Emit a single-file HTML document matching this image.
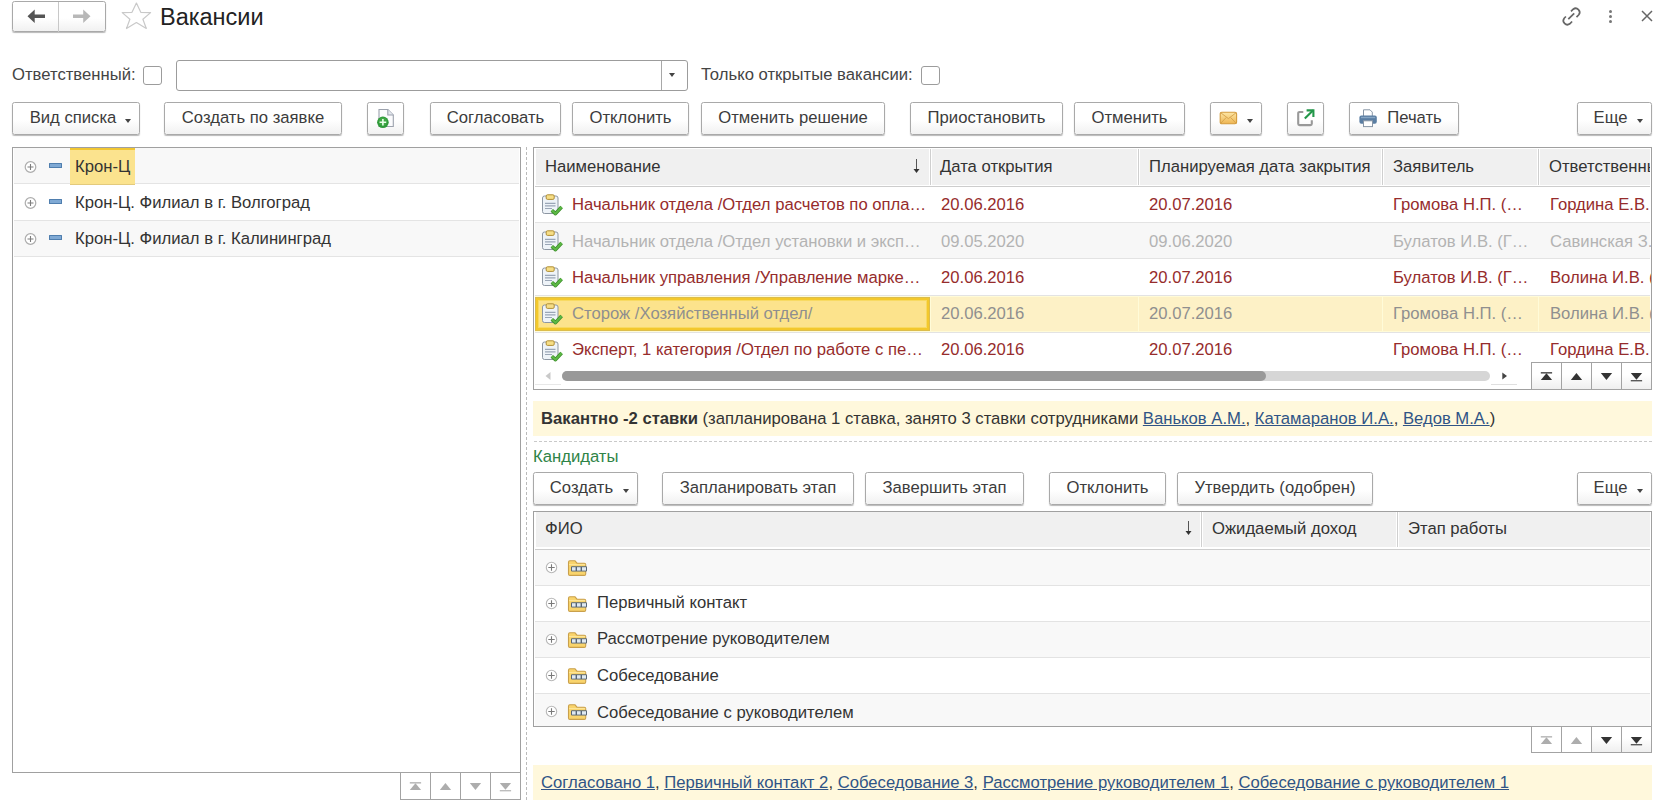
<!DOCTYPE html><html><head><meta charset="utf-8"><title>Вакансии</title><style>
*{margin:0;padding:0;box-sizing:content-box}
html,body{width:1677px;height:801px;overflow:hidden;background:#fff}
body{position:relative;font-family:"Liberation Sans",sans-serif;font-size:16.67px;color:#333}
.a{position:absolute}
.t{position:absolute;white-space:nowrap;line-height:20px}
.btn{position:absolute;border:1px solid #a9a9a9;border-radius:2.5px;background:linear-gradient(#fff 0%,#fff 55%,#f1f1f1 100%);box-shadow:0 1px 1px rgba(0,0,0,.28)}
.bl{position:absolute;top:0;line-height:30px;text-align:center;white-space:nowrap;color:#3c3c3c}
.dd{position:absolute;width:0;height:0;border-left:3.5px solid transparent;border-right:3.5px solid transparent;border-top:4px solid #444}
.ell{overflow:hidden;text-overflow:ellipsis}
</style></head><body><div class="btn" style="left:12px;top:1px;width:92px;height:29px"></div>
<div class="a" style="left:58px;top:2px;width:1px;height:30px;background:#c8c8c8"></div>
<svg class="a" style="left:27px;top:9px" width="20" height="16" viewBox="0 0 20 16"><path d="M0.5 7.2 L7.7 0.6 L7.7 5.6 L18 5.6 L18 8.9 L7.7 8.9 L7.7 13.9 Z" fill="#555"/></svg>
<svg class="a" style="left:72px;top:9px" width="20" height="16" viewBox="0 0 20 16"><path d="M18.5 7.2 L11.2 0.6 L11.2 5.6 L1 5.6 L1 8.9 L11.2 8.9 L11.2 13.9 Z" fill="#b8b8b8"/></svg>
<svg class="a" style="left:121px;top:0px" width="31" height="31" viewBox="0 0 31 31"><path d="M15.4 3 L19.8 12.3 L29.6 12.6 L21.9 19.2 L25.3 28.5 L15.4 22.5 L5.5 28.5 L8.9 19.2 L1.2 12.6 L11 12.3 Z" fill="none" stroke="#c9c9c9" stroke-width="1.2" stroke-linejoin="round"/></svg>
<div class="t" style="left:160px;top:4px;font-size:23.5px;line-height:26px;color:#222">Вакансии</div>
<svg class="a" style="left:1560px;top:0px" width="24" height="30" viewBox="0 0 24 30"><g fill="none" stroke="#666" stroke-width="1.7"><path d="M11 11.4 L13.2 9.2 A4 4 0 0 1 18.8 14.8 L16.5 17.1"/><path d="M5.9 16.5 L4.2 18.2 A4 4 0 0 0 9.8 23.8 L12.1 21.5"/><path d="M8.3 19.2 L14.2 13.4"/></g></svg>
<div class="a" style="left:1608.7px;top:9.7px;width:3.6px;height:3.6px;border-radius:50%;background:#777"></div>
<div class="a" style="left:1608.7px;top:14.7px;width:3.6px;height:3.6px;border-radius:50%;background:#777"></div>
<div class="a" style="left:1608.7px;top:19.7px;width:3.6px;height:3.6px;border-radius:50%;background:#777"></div>
<svg class="a" style="left:1640px;top:9px" width="14" height="14" viewBox="0 0 14 14"><path d="M2 2 L12 12 M12 2 L2 12" stroke="#666" stroke-width="1.45"/></svg>
<div class="t" style="left:12px;top:65px;color:#444;font-size:16.67px;font-weight:normal;">Ответственный:</div>
<div class="a" style="left:143px;top:66px;width:17px;height:17px;border:1px solid #9c9c9c;border-radius:3px;background:#fff"></div>
<div class="a" style="left:176px;top:60px;width:510px;height:29px;border:1px solid #9c9c9c;border-radius:3px;background:#fff"></div>
<div class="a" style="left:661px;top:61px;width:1px;height:29px;background:#a8a8a8"></div>
<div class="dd" style="left:669px;top:73px;border-top-color:#444"></div>
<div class="t" style="left:701px;top:65px;color:#444;font-size:16.67px;font-weight:normal;">Только открытые вакансии:</div>
<div class="a" style="left:921px;top:66px;width:17px;height:17px;border:1px solid #9c9c9c;border-radius:3px;background:#fff"></div>
<div class="btn" style="left:12px;top:102px;width:126px;height:31px">
<div class="bl" style="left:-3px;width:126px">Вид списка</div>

<div class="dd" style="left:112px;top:15.5px"></div>
</div>
<div class="btn" style="left:164px;top:102px;width:176px;height:31px">
<div class="bl" style="left:0px;width:176px">Создать по заявке</div>

</div>
<div class="btn" style="left:367px;top:102px;width:35px;height:31px">
<svg class="a" style="left:7px;top:4px" width="22" height="22" viewBox="0 0 22 22"><path d="M4 2.5 H12.8 L18.3 8 V19.5 H4 Z" fill="#fbfbfd" stroke="#9ca2ad" stroke-width="1.1"/><path d="M12.8 2.5 V8 H18.3" fill="#e4e8ee" stroke="#9ca2ad" stroke-width="1.1"/><circle cx="7.9" cy="15.3" r="5.8" fill="#2f9a3a"/><circle cx="7.9" cy="14.6" r="4.2" fill="#4cb24f" opacity="0.6"/><path d="M7.9 12 V18.6 M4.6 15.3 H11.2" stroke="#e9ffe9" stroke-width="1.6"/></svg>
</div>
<div class="btn" style="left:430px;top:102px;width:129px;height:31px">
<div class="bl" style="left:0px;width:129px">Согласовать</div>

</div>
<div class="btn" style="left:572px;top:102px;width:115px;height:31px">
<div class="bl" style="left:0px;width:115px">Отклонить</div>

</div>
<div class="btn" style="left:701px;top:102px;width:182px;height:31px">
<div class="bl" style="left:0px;width:182px">Отменить решение</div>

</div>
<div class="btn" style="left:910px;top:102px;width:151px;height:31px">
<div class="bl" style="left:0px;width:151px">Приостановить</div>

</div>
<div class="btn" style="left:1074px;top:102px;width:109px;height:31px">
<div class="bl" style="left:0px;width:109px">Отменить</div>

</div>
<div class="btn" style="left:1210px;top:102px;width:50px;height:31px">
<svg class="a" style="left:8px;top:8px" width="20" height="15" viewBox="0 0 20 15"><defs><linearGradient id="mg" x1="0" y1="0" x2="0" y2="1"><stop offset="0" stop-color="#fde7a6"/><stop offset="1" stop-color="#eeb552"/></linearGradient></defs><rect x="1.2" y="1.2" width="16.4" height="11.6" rx="1.6" fill="url(#mg)" stroke="#d39b3c" stroke-width="1.1"/><path d="M1.8 1.8 L9.4 7.6 L17 1.8 M1.8 12.2 L7.3 6.4 M17 12.2 L11.5 6.4" fill="none" stroke="#d5a04a" stroke-width="0.9"/></svg>
<div class="dd" style="left:36px;top:15.5px"></div>
</div>
<div class="btn" style="left:1287px;top:102px;width:35px;height:31px">
<svg class="a" style="left:7px;top:4px" width="22" height="22" viewBox="0 0 22 22"><path d="M8.3 5 H4.6 Q3.2 5 3.2 6.4 V16.7 Q3.2 18.1 4.6 18.1 H15.4 Q16.8 18.1 16.8 16.7 V13.2" fill="none" stroke="#999" stroke-width="2.1"/><path d="M9.8 11.6 L18.2 3.3" stroke="#23974a" stroke-width="2.1"/><path d="M11.6 3.4 H18.4 V10" fill="none" stroke="#23974a" stroke-width="2.1"/></svg>
</div>
<div class="btn" style="left:1349px;top:102px;width:108px;height:31px">
<div class="bl" style="left:10.5px;width:108px">Печать</div>
<svg class="a" style="left:9px;top:6px" width="20" height="19" viewBox="0 0 20 19"><path d="M4.5 0.8 H11 L13.3 3.1 V8 H4.5 Z" fill="#fff" stroke="#8896a6" stroke-width="1"/><rect x="0.4" y="6.6" width="17.4" height="8.2" rx="2" fill="#5a7ea3"/><rect x="2" y="7.8" width="14.2" height="1.4" fill="#86a6c4"/><rect x="4.5" y="11.8" width="9" height="5.8" fill="#fff" stroke="#8896a6" stroke-width="1"/></svg>
</div>
<div class="btn" style="left:1577px;top:102px;width:73px;height:31px">
<div class="bl" style="left:-4px;width:73px">Еще</div>

<div class="dd" style="left:59px;top:15.5px"></div>
</div>
<div class="a" style="left:12px;top:147px;width:507px;height:624px;border:1px solid #a0a0a0;background:#fff"></div>
<div class="a" style="left:14px;top:148px;width:505px;height:35px;background:#f8f8f8"></div>
<div class="a" style="left:14px;top:183px;width:505px;height:1px;background:#e4e4e4"></div>
<svg class="a" style="left:24px;top:160px" width="13" height="13" viewBox="0 0 13 13"><circle cx="6.5" cy="7" r="5.3" fill="#fff" stroke="#adadad" stroke-width="1.2"/><path d="M6.5 4 V10 M3.5 7 H9.5" stroke="#7d7d7d" stroke-width="1.1"/></svg>
<div class="a" style="left:49px;top:163px;width:11px;height:3px;border:1px solid #4f7eae;background:#7fa9d4;border-radius:0.5px"></div>
<div class="a" style="left:14px;top:184px;width:505px;height:36px;background:#fff"></div>
<div class="a" style="left:14px;top:220px;width:505px;height:1px;background:#e4e4e4"></div>
<svg class="a" style="left:24px;top:196px" width="13" height="13" viewBox="0 0 13 13"><circle cx="6.5" cy="7" r="5.3" fill="#fff" stroke="#adadad" stroke-width="1.2"/><path d="M6.5 4 V10 M3.5 7 H9.5" stroke="#7d7d7d" stroke-width="1.1"/></svg>
<div class="a" style="left:49px;top:199px;width:11px;height:3px;border:1px solid #4f7eae;background:#7fa9d4;border-radius:0.5px"></div>
<div class="a" style="left:14px;top:221px;width:505px;height:35px;background:#f8f8f8"></div>
<div class="a" style="left:14px;top:256px;width:505px;height:1px;background:#e4e4e4"></div>
<svg class="a" style="left:24px;top:232px" width="13" height="13" viewBox="0 0 13 13"><circle cx="6.5" cy="7" r="5.3" fill="#fff" stroke="#adadad" stroke-width="1.2"/><path d="M6.5 4 V10 M3.5 7 H9.5" stroke="#7d7d7d" stroke-width="1.1"/></svg>
<div class="a" style="left:49px;top:235px;width:11px;height:3px;border:1px solid #4f7eae;background:#7fa9d4;border-radius:0.5px"></div>
<div class="a" style="left:70px;top:148px;width:65px;height:37px;background:#fbe38e;border-top:2px solid #f2c733;border-bottom:1px solid #e3ca7c;box-sizing:border-box"></div>
<div class="t" style="left:75px;top:157px;color:#333;font-size:16.67px;font-weight:normal;">Крон-Ц</div>
<div class="t" style="left:75px;top:193px;color:#333;font-size:16.67px;font-weight:normal;">Крон-Ц. Филиал в г. Волгоград</div>
<div class="t" style="left:75px;top:229px;color:#333;font-size:16.67px;font-weight:normal;">Крон-Ц. Филиал в г. Калининград</div>
<div class="a" style="left:526px;top:147px;width:1px;height:654px;background:repeating-linear-gradient(#bababa 0 3px,transparent 3px 5px)"></div>
<div class="a" style="left:533px;top:147px;width:1117px;height:241px;border:1px solid #a0a0a0;background:#fff;overflow:hidden"></div>
<div class="a" style="left:536px;top:149px;width:1114px;height:36px;background:#f0f0f0"></div>
<div class="a" style="left:535px;top:186px;width:1115px;height:1px;background:#cdcdcd"></div>
<div class="a" style="left:929px;top:149px;width:3px;height:36px;background:#fff"></div>
<div class="a" style="left:930px;top:149px;width:1px;height:36px;background:#cfcfcf"></div>
<div class="a" style="left:1137px;top:149px;width:3px;height:36px;background:#fff"></div>
<div class="a" style="left:1138px;top:149px;width:1px;height:36px;background:#cfcfcf"></div>
<div class="a" style="left:1381px;top:149px;width:3px;height:36px;background:#fff"></div>
<div class="a" style="left:1382px;top:149px;width:1px;height:36px;background:#cfcfcf"></div>
<div class="a" style="left:1537px;top:149px;width:3px;height:36px;background:#fff"></div>
<div class="a" style="left:1538px;top:149px;width:1px;height:36px;background:#cfcfcf"></div>
<div class="t" style="left:545px;top:157px;color:#333;font-size:16.67px;font-weight:normal;">Наименование</div>
<svg class="a" style="left:912px;top:158px" width="9" height="16" viewBox="0 0 9 16"><path d="M4.5 1 V14" stroke="#555" stroke-width="1"/><path d="M1.5 11 L4.5 15 L7.5 11 Z" fill="#333"/></svg>
<div class="t" style="left:940px;top:157px;color:#333;font-size:16.67px;font-weight:normal;">Дата открытия</div>
<div class="t" style="left:1149px;top:157px;color:#333;font-size:16.67px;font-weight:normal;">Планируемая дата закрытия</div>
<div class="t" style="left:1393px;top:157px;color:#333;font-size:16.67px;font-weight:normal;">Заявитель</div>
<div class="t" style="left:1549px;top:157px;color:#333;font-size:16.67px;font-weight:normal;width:101px;overflow:hidden">Ответственный</div>
<div class="a" style="left:535px;top:187px;width:1115px;height:35px;background:#fff"></div>
<div class="a" style="left:535px;top:222px;width:1115px;height:1px;background:#e3e3e3"></div>
<svg class="a" style="left:542px;top:194px" width="22" height="22" viewBox="0 0 22 22"><rect x="0.5" y="2" width="15.5" height="17.5" rx="2" fill="#eef3f8" stroke="#8d97a3"/><rect x="4.2" y="0.8" width="8" height="4.6" rx="1.3" fill="#f6de86" stroke="#b08e36"/><path d="M3 9.3 H13.5 M3 11.8 H13.5 M3 14.5 H10" stroke="#9aa6b6" stroke-width="1.2"/><path d="M9.8 16.3 L13.5 19.6 L19.6 13" fill="none" stroke="#3d8f2c" stroke-width="3.6" stroke-linejoin="round"/><path d="M9.8 16.3 L13.5 19.6 L19.6 13" fill="none" stroke="#5cb845" stroke-width="2"/></svg>
<div class="t" style="left:572px;top:195px;color:#962c2c;font-size:16.67px;font-weight:normal;">Начальник отдела /Отдел расчетов по опла…</div>
<div class="t" style="left:941px;top:195px;color:#962c2c;font-size:16.67px;font-weight:normal;">20.06.2016</div>
<div class="t" style="left:1149px;top:195px;color:#962c2c;font-size:16.67px;font-weight:normal;">20.07.2016</div>
<div class="t" style="left:1393px;top:195px;color:#962c2c;font-size:16.67px;font-weight:normal;">Громова Н.П. (…</div>
<div class="t" style="left:1550px;top:195px;color:#962c2c;font-size:16.67px;font-weight:normal;width:101px;overflow:hidden">Гордина Е.В. (Г</div>
<div class="a" style="left:535px;top:223px;width:1115px;height:35px;background:#f7f7f7"></div>
<div class="a" style="left:535px;top:258px;width:1115px;height:1px;background:#e3e3e3"></div>
<svg class="a" style="left:542px;top:230px" width="22" height="22" viewBox="0 0 22 22"><rect x="0.5" y="2" width="15.5" height="17.5" rx="2" fill="#eef3f8" stroke="#8d97a3"/><rect x="4.2" y="0.8" width="8" height="4.6" rx="1.3" fill="#f6de86" stroke="#b08e36"/><path d="M3 9.3 H13.5 M3 11.8 H13.5 M3 14.5 H10" stroke="#9aa6b6" stroke-width="1.2"/><path d="M9.8 16.3 L13.5 19.6 L19.6 13" fill="none" stroke="#3d8f2c" stroke-width="3.6" stroke-linejoin="round"/><path d="M9.8 16.3 L13.5 19.6 L19.6 13" fill="none" stroke="#5cb845" stroke-width="2"/></svg>
<div class="t" style="left:572px;top:232px;color:#b3b3b3;font-size:16.67px;font-weight:normal;">Начальник отдела /Отдел установки и эксп…</div>
<div class="t" style="left:941px;top:232px;color:#b3b3b3;font-size:16.67px;font-weight:normal;">09.05.2020</div>
<div class="t" style="left:1149px;top:232px;color:#b3b3b3;font-size:16.67px;font-weight:normal;">09.06.2020</div>
<div class="t" style="left:1393px;top:232px;color:#b3b3b3;font-size:16.67px;font-weight:normal;">Булатов И.В. (Г…</div>
<div class="t" style="left:1550px;top:232px;color:#b3b3b3;font-size:16.67px;font-weight:normal;width:101px;overflow:hidden">Савинская З.В.</div>
<div class="a" style="left:535px;top:259px;width:1115px;height:36px;background:#fff"></div>
<div class="a" style="left:535px;top:295px;width:1115px;height:1px;background:#e3e3e3"></div>
<svg class="a" style="left:542px;top:266px" width="22" height="22" viewBox="0 0 22 22"><rect x="0.5" y="2" width="15.5" height="17.5" rx="2" fill="#eef3f8" stroke="#8d97a3"/><rect x="4.2" y="0.8" width="8" height="4.6" rx="1.3" fill="#f6de86" stroke="#b08e36"/><path d="M3 9.3 H13.5 M3 11.8 H13.5 M3 14.5 H10" stroke="#9aa6b6" stroke-width="1.2"/><path d="M9.8 16.3 L13.5 19.6 L19.6 13" fill="none" stroke="#3d8f2c" stroke-width="3.6" stroke-linejoin="round"/><path d="M9.8 16.3 L13.5 19.6 L19.6 13" fill="none" stroke="#5cb845" stroke-width="2"/></svg>
<div class="t" style="left:572px;top:268px;color:#962c2c;font-size:16.67px;font-weight:normal;">Начальник управления /Управление марке…</div>
<div class="t" style="left:941px;top:268px;color:#962c2c;font-size:16.67px;font-weight:normal;">20.06.2016</div>
<div class="t" style="left:1149px;top:268px;color:#962c2c;font-size:16.67px;font-weight:normal;">20.07.2016</div>
<div class="t" style="left:1393px;top:268px;color:#962c2c;font-size:16.67px;font-weight:normal;">Булатов И.В. (Г…</div>
<div class="t" style="left:1550px;top:268px;color:#962c2c;font-size:16.67px;font-weight:normal;width:101px;overflow:hidden">Волина И.В. (Г</div>
<div class="a" style="left:535px;top:296px;width:1115px;height:36px;background:#fdf1c6"></div>
<div class="a" style="left:535px;top:332px;width:1115px;height:1px;background:#e3e3e3"></div>
<div class="a" style="left:535px;top:296px;width:1115px;height:1px;background:#fffbd8"></div>
<div class="a" style="left:535px;top:331px;width:1115px;height:1px;background:#fffbd8"></div>
<div class="a" style="left:930px;top:296px;width:1px;height:36px;background:#fffbd8"></div>
<div class="a" style="left:1138px;top:296px;width:1px;height:36px;background:#fffbd8"></div>
<div class="a" style="left:1382px;top:296px;width:1px;height:36px;background:#fffbd8"></div>
<div class="a" style="left:1538px;top:296px;width:1px;height:36px;background:#fffbd8"></div>
<div class="a" style="left:535px;top:297px;width:393px;height:32px;border:1px solid #dcbd4c;box-shadow:inset 0 0 0 2px #f3c82c,inset 0 0 0 3px #f8da62;background:#fce38c"></div>
<svg class="a" style="left:542px;top:303px" width="22" height="22" viewBox="0 0 22 22"><rect x="0.5" y="2" width="15.5" height="17.5" rx="2" fill="#eef3f8" stroke="#8d97a3"/><rect x="4.2" y="0.8" width="8" height="4.6" rx="1.3" fill="#f6de86" stroke="#b08e36"/><path d="M3 9.3 H13.5 M3 11.8 H13.5 M3 14.5 H10" stroke="#9aa6b6" stroke-width="1.2"/><path d="M9.8 16.3 L13.5 19.6 L19.6 13" fill="none" stroke="#3d8f2c" stroke-width="3.6" stroke-linejoin="round"/><path d="M9.8 16.3 L13.5 19.6 L19.6 13" fill="none" stroke="#5cb845" stroke-width="2"/></svg>
<div class="t" style="left:572px;top:304px;color:#8f8f8f;font-size:16.67px;font-weight:normal;">Сторож /Хозяйственный отдел/</div>
<div class="t" style="left:941px;top:304px;color:#8f8f8f;font-size:16.67px;font-weight:normal;">20.06.2016</div>
<div class="t" style="left:1149px;top:304px;color:#8f8f8f;font-size:16.67px;font-weight:normal;">20.07.2016</div>
<div class="t" style="left:1393px;top:304px;color:#8f8f8f;font-size:16.67px;font-weight:normal;">Громова Н.П. (…</div>
<div class="t" style="left:1550px;top:304px;color:#8f8f8f;font-size:16.67px;font-weight:normal;width:101px;overflow:hidden">Волина И.В. (Г</div>
<div class="a" style="left:535px;top:333px;width:1115px;height:34px;background:#fff"></div>
<svg class="a" style="left:542px;top:340px" width="22" height="22" viewBox="0 0 22 22"><rect x="0.5" y="2" width="15.5" height="17.5" rx="2" fill="#eef3f8" stroke="#8d97a3"/><rect x="4.2" y="0.8" width="8" height="4.6" rx="1.3" fill="#f6de86" stroke="#b08e36"/><path d="M3 9.3 H13.5 M3 11.8 H13.5 M3 14.5 H10" stroke="#9aa6b6" stroke-width="1.2"/><path d="M9.8 16.3 L13.5 19.6 L19.6 13" fill="none" stroke="#3d8f2c" stroke-width="3.6" stroke-linejoin="round"/><path d="M9.8 16.3 L13.5 19.6 L19.6 13" fill="none" stroke="#5cb845" stroke-width="2"/></svg>
<div class="t" style="left:572px;top:340px;color:#962c2c;font-size:16.67px;font-weight:normal;">Эксперт, 1 категория /Отдел по работе с пе…</div>
<div class="t" style="left:941px;top:340px;color:#962c2c;font-size:16.67px;font-weight:normal;">20.06.2016</div>
<div class="t" style="left:1149px;top:340px;color:#962c2c;font-size:16.67px;font-weight:normal;">20.07.2016</div>
<div class="t" style="left:1393px;top:340px;color:#962c2c;font-size:16.67px;font-weight:normal;">Громова Н.П. (…</div>
<div class="t" style="left:1550px;top:340px;color:#962c2c;font-size:16.67px;font-weight:normal;width:101px;overflow:hidden">Гордина Е.В. (Г</div>
<svg class="a" style="left:544px;top:371px" width="8" height="10" viewBox="0 0 8 10"><path d="M6.5 1 L1.5 5 L6.5 9 Z" fill="#c9c9c9"/></svg>
<div class="a" style="left:535px;top:384px;width:26px;height:1px;background:#e8e8e8"></div>
<div class="a" style="left:562px;top:371px;width:928px;height:10px;border-radius:5px;background:#d6d6d6"></div>
<div class="a" style="left:562px;top:371px;width:704px;height:10px;border-radius:5px;background:#999"></div>
<svg class="a" style="left:1501px;top:371px" width="8" height="10" viewBox="0 0 8 10"><path d="M1.3 1.6 L6 5 L1.3 8.6 Z" fill="#444"/></svg>
<div class="a" style="left:1491px;top:384px;width:26px;height:1px;background:#e0e0e0"></div>
<div class="a" style="left:533px;top:401px;width:1119px;height:35px;background:#fff8dc"></div>
<div class="a" style="left:533px;top:441px;width:1119px;height:1px;background:repeating-linear-gradient(90deg,transparent 0 1px,#c9c9c9 1px 4px,transparent 4px 5px)"></div>
<div class="t" style="left:541px;top:409px;color:#333;font-size:16.67px;font-weight:normal;"><b style="color:#333">Вакантно -2 ставки</b> (запланирована 1 ставка, занято 3 ставки сотрудниками <u style="color:#2f5486">Ваньков А.М.</u>, <u style="color:#2f5486">Катамаранов И.А.</u>, <u style="color:#2f5486">Ведов М.А.</u>)</div>
<div class="t" style="left:533px;top:447px;color:#2f8447;font-size:16.67px;font-weight:normal;">Кандидаты</div>
<div class="btn" style="left:533px;top:472px;width:103px;height:31px">
<div class="bl" style="left:-4px;width:103px">Создать</div>

<div class="dd" style="left:89px;top:15.5px"></div>
</div>
<div class="btn" style="left:662px;top:472px;width:190px;height:31px">
<div class="bl" style="left:0px;width:190px">Запланировать этап</div>

</div>
<div class="btn" style="left:865px;top:472px;width:157px;height:31px">
<div class="bl" style="left:0px;width:157px">Завершить этап</div>

</div>
<div class="btn" style="left:1049px;top:472px;width:115px;height:31px">
<div class="bl" style="left:0px;width:115px">Отклонить</div>

</div>
<div class="btn" style="left:1177px;top:472px;width:194px;height:31px">
<div class="bl" style="left:0px;width:194px">Утвердить (одобрен)</div>

</div>
<div class="btn" style="left:1577px;top:472px;width:73px;height:31px">
<div class="bl" style="left:-4px;width:73px">Еще</div>

<div class="dd" style="left:59px;top:15.5px"></div>
</div>
<div class="a" style="left:533px;top:511px;width:1117px;height:214px;border:1px solid #a0a0a0;background:#fff"></div>
<div class="a" style="left:536px;top:512px;width:1114px;height:35px;background:#f0f0f0"></div>
<div class="a" style="left:535px;top:549px;width:1115px;height:1px;background:#cdcdcd"></div>
<div class="a" style="left:1200px;top:512px;width:3px;height:35px;background:#fff"></div>
<div class="a" style="left:1201px;top:512px;width:1px;height:35px;background:#cfcfcf"></div>
<div class="a" style="left:1396px;top:512px;width:3px;height:35px;background:#fff"></div>
<div class="a" style="left:1397px;top:512px;width:1px;height:35px;background:#cfcfcf"></div>
<div class="t" style="left:545px;top:519px;color:#333;font-size:16.67px;font-weight:normal;">ФИО</div>
<svg class="a" style="left:1184px;top:520px" width="9" height="16" viewBox="0 0 9 16"><path d="M4.5 1 V14" stroke="#555" stroke-width="1"/><path d="M1.5 11 L4.5 15 L7.5 11 Z" fill="#333"/></svg>
<div class="t" style="left:1212px;top:519px;color:#333;font-size:16.67px;font-weight:normal;">Ожидаемый доход</div>
<div class="t" style="left:1408px;top:519px;color:#333;font-size:16.67px;font-weight:normal;">Этап работы</div>
<div class="a" style="left:535px;top:550px;width:1115px;height:35px;background:#f8f8f8"></div>
<div class="a" style="left:535px;top:585px;width:1115px;height:1px;background:#e3e3e3"></div>
<svg class="a" style="left:545px;top:561.0px" width="13" height="13" viewBox="0 0 13 13"><circle cx="6.5" cy="6.5" r="5.2" fill="#fff" stroke="#b8b8b8" stroke-width="1.1"/><path d="M6.5 3.3 V9.7 M3.3 6.5 H9.7" stroke="#7a7a7a" stroke-width="1.1"/></svg>
<svg class="a" style="left:567px;top:560px" width="22" height="17" viewBox="0 0 22 17"><path d="M1.5 2.2 Q1.5 0.8 2.9 0.8 H8 L10 3.2 H17.3 Q18.7 3.2 18.7 4.6 V14 Q18.7 15.4 17.3 15.4 H2.9 Q1.5 15.4 1.5 14 Z" fill="#f9d46c" stroke="#c9a04c" stroke-width="1.1"/><path d="M2 4.6 H18.2" stroke="#fde79c" stroke-width="1"/><rect x="4" y="6.2" width="16" height="5.4" rx="1" fill="#566576"/><rect x="5" y="7.2" width="3.6" height="3.4" fill="#dfe9f1"/><rect x="10" y="7.2" width="3.6" height="3.4" fill="#dfe9f1"/><rect x="15" y="7.2" width="4" height="3.4" fill="#dfe9f1"/></svg>
<div class="a" style="left:535px;top:586px;width:1115px;height:35px;background:#fff"></div>
<div class="a" style="left:535px;top:621px;width:1115px;height:1px;background:#e3e3e3"></div>
<svg class="a" style="left:545px;top:597.0px" width="13" height="13" viewBox="0 0 13 13"><circle cx="6.5" cy="6.5" r="5.2" fill="#fff" stroke="#b8b8b8" stroke-width="1.1"/><path d="M6.5 3.3 V9.7 M3.3 6.5 H9.7" stroke="#7a7a7a" stroke-width="1.1"/></svg>
<svg class="a" style="left:567px;top:596px" width="22" height="17" viewBox="0 0 22 17"><path d="M1.5 2.2 Q1.5 0.8 2.9 0.8 H8 L10 3.2 H17.3 Q18.7 3.2 18.7 4.6 V14 Q18.7 15.4 17.3 15.4 H2.9 Q1.5 15.4 1.5 14 Z" fill="#f9d46c" stroke="#c9a04c" stroke-width="1.1"/><path d="M2 4.6 H18.2" stroke="#fde79c" stroke-width="1"/><rect x="4" y="6.2" width="16" height="5.4" rx="1" fill="#566576"/><rect x="5" y="7.2" width="3.6" height="3.4" fill="#dfe9f1"/><rect x="10" y="7.2" width="3.6" height="3.4" fill="#dfe9f1"/><rect x="15" y="7.2" width="4" height="3.4" fill="#dfe9f1"/></svg>
<div class="t" style="left:597px;top:593px;color:#333;font-size:16.67px;font-weight:normal;">Первичный контакт</div>
<div class="a" style="left:535px;top:622px;width:1115px;height:35px;background:#f8f8f8"></div>
<div class="a" style="left:535px;top:657px;width:1115px;height:1px;background:#e3e3e3"></div>
<svg class="a" style="left:545px;top:633.0px" width="13" height="13" viewBox="0 0 13 13"><circle cx="6.5" cy="6.5" r="5.2" fill="#fff" stroke="#b8b8b8" stroke-width="1.1"/><path d="M6.5 3.3 V9.7 M3.3 6.5 H9.7" stroke="#7a7a7a" stroke-width="1.1"/></svg>
<svg class="a" style="left:567px;top:632px" width="22" height="17" viewBox="0 0 22 17"><path d="M1.5 2.2 Q1.5 0.8 2.9 0.8 H8 L10 3.2 H17.3 Q18.7 3.2 18.7 4.6 V14 Q18.7 15.4 17.3 15.4 H2.9 Q1.5 15.4 1.5 14 Z" fill="#f9d46c" stroke="#c9a04c" stroke-width="1.1"/><path d="M2 4.6 H18.2" stroke="#fde79c" stroke-width="1"/><rect x="4" y="6.2" width="16" height="5.4" rx="1" fill="#566576"/><rect x="5" y="7.2" width="3.6" height="3.4" fill="#dfe9f1"/><rect x="10" y="7.2" width="3.6" height="3.4" fill="#dfe9f1"/><rect x="15" y="7.2" width="4" height="3.4" fill="#dfe9f1"/></svg>
<div class="t" style="left:597px;top:629px;color:#333;font-size:16.67px;font-weight:normal;">Рассмотрение руководителем</div>
<div class="a" style="left:535px;top:658px;width:1115px;height:35px;background:#fff"></div>
<div class="a" style="left:535px;top:693px;width:1115px;height:1px;background:#e3e3e3"></div>
<svg class="a" style="left:545px;top:669.0px" width="13" height="13" viewBox="0 0 13 13"><circle cx="6.5" cy="6.5" r="5.2" fill="#fff" stroke="#b8b8b8" stroke-width="1.1"/><path d="M6.5 3.3 V9.7 M3.3 6.5 H9.7" stroke="#7a7a7a" stroke-width="1.1"/></svg>
<svg class="a" style="left:567px;top:668px" width="22" height="17" viewBox="0 0 22 17"><path d="M1.5 2.2 Q1.5 0.8 2.9 0.8 H8 L10 3.2 H17.3 Q18.7 3.2 18.7 4.6 V14 Q18.7 15.4 17.3 15.4 H2.9 Q1.5 15.4 1.5 14 Z" fill="#f9d46c" stroke="#c9a04c" stroke-width="1.1"/><path d="M2 4.6 H18.2" stroke="#fde79c" stroke-width="1"/><rect x="4" y="6.2" width="16" height="5.4" rx="1" fill="#566576"/><rect x="5" y="7.2" width="3.6" height="3.4" fill="#dfe9f1"/><rect x="10" y="7.2" width="3.6" height="3.4" fill="#dfe9f1"/><rect x="15" y="7.2" width="4" height="3.4" fill="#dfe9f1"/></svg>
<div class="t" style="left:597px;top:666px;color:#333;font-size:16.67px;font-weight:normal;">Собеседование</div>
<div class="a" style="left:535px;top:694px;width:1115px;height:32px;background:#f8f8f8"></div>
<svg class="a" style="left:545px;top:705.0px" width="13" height="13" viewBox="0 0 13 13"><circle cx="6.5" cy="6.5" r="5.2" fill="#fff" stroke="#b8b8b8" stroke-width="1.1"/><path d="M6.5 3.3 V9.7 M3.3 6.5 H9.7" stroke="#7a7a7a" stroke-width="1.1"/></svg>
<svg class="a" style="left:567px;top:704px" width="22" height="17" viewBox="0 0 22 17"><path d="M1.5 2.2 Q1.5 0.8 2.9 0.8 H8 L10 3.2 H17.3 Q18.7 3.2 18.7 4.6 V14 Q18.7 15.4 17.3 15.4 H2.9 Q1.5 15.4 1.5 14 Z" fill="#f9d46c" stroke="#c9a04c" stroke-width="1.1"/><path d="M2 4.6 H18.2" stroke="#fde79c" stroke-width="1"/><rect x="4" y="6.2" width="16" height="5.4" rx="1" fill="#566576"/><rect x="5" y="7.2" width="3.6" height="3.4" fill="#dfe9f1"/><rect x="10" y="7.2" width="3.6" height="3.4" fill="#dfe9f1"/><rect x="15" y="7.2" width="4" height="3.4" fill="#dfe9f1"/></svg>
<div class="t" style="left:597px;top:703px;color:#333;font-size:16.67px;font-weight:normal;">Собеседование с руководителем</div>
<div class="a" style="left:1531px;top:362px;width:29px;height:26px;border:1px solid #a3a3a3;background:linear-gradient(#fff 45%,#efefef)"></div>
<svg class="a" style="left:1540px;top:371px" width="14" height="12" viewBox="0 0 14 12"><rect x="0.8" y="1" width="11.3" height="1.6" fill="#5a5a5a"/><path d="M0.8 9 L6.45 2.2 L12.1 9 Z" fill="#333"/></svg>
<div class="a" style="left:1561px;top:362px;width:29px;height:26px;border:1px solid #a3a3a3;background:linear-gradient(#fff 45%,#efefef)"></div>
<svg class="a" style="left:1570px;top:371px" width="14" height="12" viewBox="0 0 14 12"><path d="M0.8 9 L6.45 2 L12.1 9 Z" fill="#333"/></svg>
<div class="a" style="left:1591px;top:362px;width:29px;height:26px;border:1px solid #a3a3a3;background:linear-gradient(#fff 45%,#efefef)"></div>
<svg class="a" style="left:1600px;top:371px" width="14" height="12" viewBox="0 0 14 12"><path d="M0.8 2 L6.45 9 L12.1 2 Z" fill="#333"/></svg>
<div class="a" style="left:1621px;top:362px;width:29px;height:26px;border:1px solid #a3a3a3;background:linear-gradient(#fff 45%,#efefef)"></div>
<svg class="a" style="left:1630px;top:371px" width="14" height="12" viewBox="0 0 14 12"><path d="M0.8 2 L6.45 8.8 L12.1 2 Z" fill="#333"/><rect x="0.8" y="9" width="11.3" height="1.4" fill="#5a5a5a"/></svg>
<div class="a" style="left:1531px;top:726px;width:29px;height:25px;border:1px solid #a3a3a3;background:#fff"></div>
<svg class="a" style="left:1540px;top:735px" width="14" height="12" viewBox="0 0 14 12"><rect x="0.8" y="1" width="11.3" height="1.6" fill="#bdbdbd"/><path d="M0.8 9 L6.45 2.2 L12.1 9 Z" fill="#adadad"/></svg>
<div class="a" style="left:1561px;top:726px;width:29px;height:25px;border:1px solid #a3a3a3;background:#fff"></div>
<svg class="a" style="left:1570px;top:735px" width="14" height="12" viewBox="0 0 14 12"><path d="M0.8 9 L6.45 2 L12.1 9 Z" fill="#adadad"/></svg>
<div class="a" style="left:1591px;top:726px;width:29px;height:25px;border:1px solid #a3a3a3;background:linear-gradient(#fff 45%,#efefef)"></div>
<svg class="a" style="left:1600px;top:735px" width="14" height="12" viewBox="0 0 14 12"><path d="M0.8 2 L6.45 9 L12.1 2 Z" fill="#333"/></svg>
<div class="a" style="left:1621px;top:726px;width:29px;height:25px;border:1px solid #a3a3a3;background:linear-gradient(#fff 45%,#efefef)"></div>
<svg class="a" style="left:1630px;top:735px" width="14" height="12" viewBox="0 0 14 12"><path d="M0.8 2 L6.45 8.8 L12.1 2 Z" fill="#333"/><rect x="0.8" y="9" width="11.3" height="1.4" fill="#5a5a5a"/></svg>
<div class="a" style="left:400px;top:772px;width:29px;height:26px;border:1px solid #a3a3a3;background:#fff"></div>
<svg class="a" style="left:409px;top:781px" width="14" height="12" viewBox="0 0 14 12"><rect x="0.8" y="1" width="11.3" height="1.6" fill="#bdbdbd"/><path d="M0.8 9 L6.45 2.2 L12.1 9 Z" fill="#adadad"/></svg>
<div class="a" style="left:430px;top:772px;width:29px;height:26px;border:1px solid #a3a3a3;background:#fff"></div>
<svg class="a" style="left:439px;top:781px" width="14" height="12" viewBox="0 0 14 12"><path d="M0.8 9 L6.45 2 L12.1 9 Z" fill="#adadad"/></svg>
<div class="a" style="left:460px;top:772px;width:29px;height:26px;border:1px solid #a3a3a3;background:#fff"></div>
<svg class="a" style="left:469px;top:781px" width="14" height="12" viewBox="0 0 14 12"><path d="M0.8 2 L6.45 9 L12.1 2 Z" fill="#adadad"/></svg>
<div class="a" style="left:490px;top:772px;width:29px;height:26px;border:1px solid #a3a3a3;background:#fff"></div>
<svg class="a" style="left:499px;top:781px" width="14" height="12" viewBox="0 0 14 12"><path d="M0.8 2 L6.45 8.8 L12.1 2 Z" fill="#adadad"/><rect x="0.8" y="9" width="11.3" height="1.4" fill="#bdbdbd"/></svg>
<div class="a" style="left:533px;top:765px;width:1119px;height:35px;background:#fff8dc"></div>
<div class="t" style="left:541px;top:773px;color:#333;font-size:16.67px;font-weight:normal;"><u style="color:#2f5486">Согласовано 1</u>, <u style="color:#2f5486">Первичный контакт 2</u>, <u style="color:#2f5486">Собеседование 3</u>, <u style="color:#2f5486">Рассмотрение руководителем 1</u>, <u style="color:#2f5486">Собеседование с руководителем 1</u></div></body></html>
